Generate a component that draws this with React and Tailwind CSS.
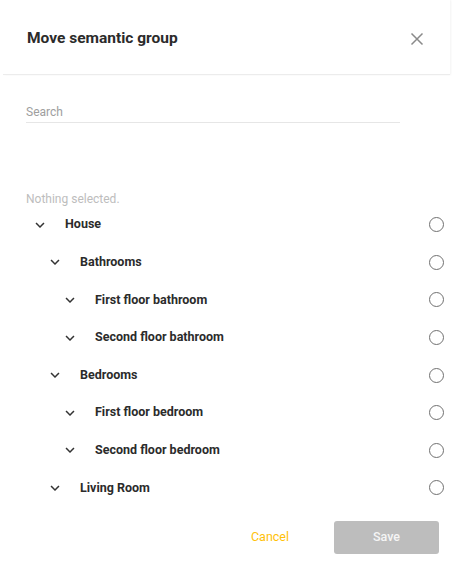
import React, { useState } from 'react';

const tree = [
  { id: 1, name: 'House', level: 0 },
  { id: 2, name: 'Bathrooms', level: 1 },
  { id: 3, name: 'First floor bathroom', level: 2 },
  { id: 4, name: 'Second floor bathroom', level: 2 },
  { id: 5, name: 'Bedrooms', level: 1 },
  { id: 6, name: 'First floor bedroom', level: 2 },
  { id: 7, name: 'Second floor bedroom', level: 2 },
  { id: 8, name: 'Living Room', level: 1 },
];

const indent = ['pl-[31px]', 'pl-[46px]', 'pl-[61px]'];

const Chevron = () => (
  <svg width="18" height="18" viewBox="0 0 24 24" className="text-[#333]">
    <path d="M7.41 8.59 12 13.17l4.59-4.58L18 10l-6 6-6-6z" fill="currentColor" />
  </svg>
);

const App = () => {
  const [search, setSearch] = useState('');
  const [selected, setSelected] = useState(null);

  return (
    <div className="w-[453px] h-[571px] bg-white font-['Roboto',sans-serif] overflow-hidden">
      {/* Header */}
      <div className="mx-[3px] h-[75px] flex items-center justify-between pl-[24px] pr-[26px] pt-[3px] border-b border-[#ececec] shadow-[1px_0_2px_rgba(0,0,0,0.05)]">
        <h2 className="text-[15.5px] font-bold text-[#2b2b2b]">Move semantic group</h2>
        <button className="text-[#8a8a8a]">
          <svg width="14" height="14" viewBox="0 0 14 14">
            <path d="M1.5 1.5l11 11M12.5 1.5l-11 11" stroke="currentColor" strokeWidth="1.5" />
          </svg>
        </button>
      </div>

      {/* Search */}
      <div className="pl-[26px] pr-[53px] pt-[24px]">
        <input
          value={search}
          onChange={(e) => setSearch(e.target.value)}
          placeholder="Search"
          className="w-full h-[19px] text-[12px] text-[#333] placeholder-[#9e9e9e] border-b border-[#e6e6e6] outline-none pb-[1px]"
        />
      </div>

      <div className="pl-[26px] pt-[69px] text-[12px] text-[#bdbdbd] leading-[14px]">
        {selected ? tree.find((t) => t.id === selected).name : 'Nothing selected.'}
      </div>

      {/* Tree */}
      <div>
        {tree.map((node) => (
          <div
            key={node.id}
            className={`h-[37.6px] flex items-center justify-between pr-[9px] ${indent[node.level]}`}
          >
            <div className="flex items-center gap-[16px]">
              <Chevron />
              <span className="text-[12.5px] font-bold text-[#2b2b2b]">{node.name}</span>
            </div>
            <button
              onClick={() => setSelected(node.id)}
              className="w-[15px] h-[15px] rounded-full border-[1.5px] border-[#707070]"
            />
          </div>
        ))}
      </div>

      {/* Footer */}
      <div className="flex items-center justify-end gap-[24px] pr-[14px] pt-[14px]">
        <button className="w-[80px] text-[12.5px] text-[#ffc107]">Cancel</button>
        <button className="w-[105px] h-[33px] rounded-[3px] bg-[#bdbdbd] text-[12.5px] font-medium text-[#f5f5f5]">
          Save
        </button>
      </div>
    </div>
  );
};

export default App;
